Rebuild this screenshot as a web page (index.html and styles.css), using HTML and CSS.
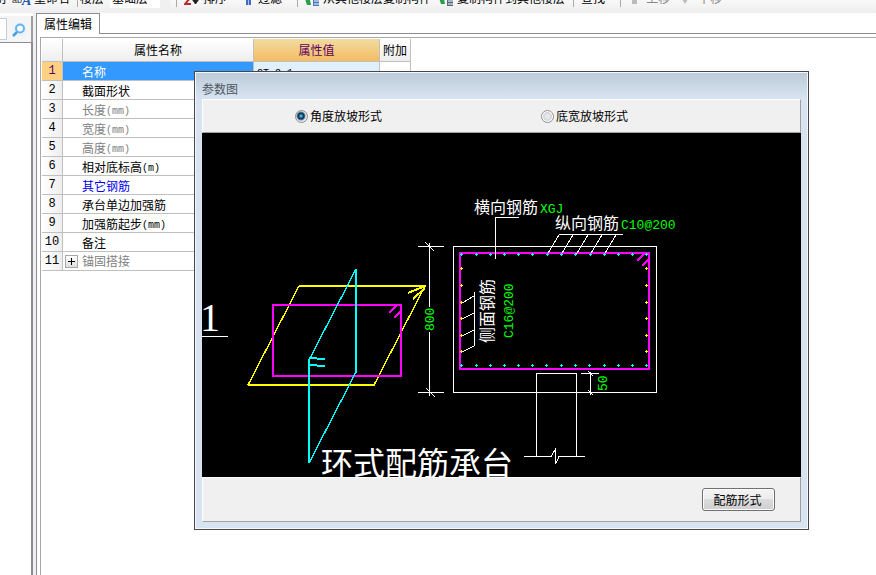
FILE: index.html
```html
<!DOCTYPE html>
<html lang="zh-CN">
<head>
<meta charset="utf-8">
<title>属性编辑</title>
<link rel="stylesheet" href="styles.css">
</head>
<body>
<header class="toolbar">
  <div class="tools">
    <button class="tool first">制</button>
    <button class="tool rename"><svg width="20" height="16" viewBox="0 0 20 16"><text class="ico-ab" x="0" y="13">ab</text><text class="ico-a" x="10" y="15">A</text></svg>重命名</button>
    <span class="sep"></span>
    <label class="floor" for="floor">楼层</label>
    <select id="floor" class="combo"><option>基础层</option></select>
    <span class="sep"></span>
    <button class="tool sort"><svg width="16" height="16" viewBox="0 0 16 16"><path d="M1 8h5L1 14h6" fill="none" stroke="#b03030" stroke-width="2"/><path d="M11 2v8M8 9h7l-3.500 5z" fill="#222" stroke="#222"/></svg>排序</button>
    <button class="tool filter"><svg width="10" height="16" viewBox="0 0 10 16"><path d="M3 4h5v11H3z" fill="#4169c8"/><path d="M5 4h1v11H5z" fill="#a8c0f0"/></svg>过滤</button>
    <span class="sep"></span>
    <button class="tool"><svg width="15" height="16" viewBox="0 0 15 16"><path d="M0 9l5 1 1 5H2z" fill="#28a048"/><path d="M8 3h6v13H8z" fill="#4878c0"/><path d="M9 8h5M9 11h5M9 14h5" stroke="#fff"/></svg>从其他楼层复制构件</button>
    <button class="tool"><svg width="15" height="16" viewBox="0 0 15 16"><path d="M0 8l5 1 1 5H2z" fill="#28a048"/><path d="M8 3h6v13H8z" fill="#586880"/><path d="M9 8h5M9 11h5M9 14h5" stroke="#fff"/></svg>复制构件到其他楼层</button>
    <span class="sep"></span>
    <button class="tool find">查找</button>
    <span class="sep"></span>
    <button class="tool move" disabled><svg width="15" height="16" viewBox="0 0 15 16"><path d="M4 8h5v6H4z" fill="#bbb"/></svg>上移</button>
    <button class="tool move" disabled><svg width="15" height="16" viewBox="0 0 15 16"><path d="M2 9h6l-3 5z" fill="#bbb"/></svg>下移</button>
  </div>
</header>
<main class="work">
  <aside class="side">
    <div class="search">
      <input class="search-box" type="text" aria-label="搜索">
      <button class="search-go" aria-label="查找构件"><svg width="14" height="14" viewBox="0 0 14 14"><rect width="14" height="14" fill="#eef3f7"/><circle cx="8" cy="5.500" r="4" fill="#f4fbff" stroke="#64b4ec" stroke-width="2"/><path d="M5 9l-4 4" stroke="#4c9cdc" stroke-width="2.500"/></svg></button>
    </div>
    <div class="tree"></div>
  </aside>
  <section class="editor">
    <div class="tabs"><button class="tab">属性编辑</button><span class="tab-line"></span></div>
    <div class="sheet">
      <table class="props">
        <colgroup><col class="c-no"><col class="c-name"><col class="c-value"><col class="c-extra"></colgroup>
        <thead><tr><th></th><th>属性名称</th><th class="current">属性值</th><th>附加</th></tr></thead>
        <tbody>
          <tr class="selected"><th>1</th><td>名称</td><td><span class="half">CT-2-1</span></td><td></td></tr>
          <tr><th>2</th><td>截面形状</td><td></td><td></td></tr>
          <tr class="locked"><th>3</th><td>长度<span class="half">(mm)</span></td><td></td><td></td></tr>
          <tr class="locked"><th>4</th><td>宽度<span class="half">(mm)</span></td><td></td><td></td></tr>
          <tr class="locked"><th>5</th><td>高度<span class="half">(mm)</span></td><td></td><td></td></tr>
          <tr><th>6</th><td>相对底标高<span class="half">(m)</span></td><td></td><td></td></tr>
          <tr class="linked"><th>7</th><td>其它钢筋</td><td></td><td></td></tr>
          <tr><th>8</th><td>承台单边加强筋</td><td></td><td></td></tr>
          <tr><th>9</th><td>加强筋起步<span class="half">(mm)</span></td><td></td><td></td></tr>
          <tr><th>10</th><td>备注</td><td></td><td></td></tr>
          <tr class="locked group"><th>11</th><td><div class="group-cell"><button class="expand" aria-label="展开"><svg width="9" height="9" viewBox="0 0 9 9"><path d="M1 4.500h7M4.500 1v7" stroke="#000"/></svg></button>锚固搭接</div></td><td></td><td></td></tr>
        </tbody>
      </table>
    </div>
  </section>
</main>

<div class="dialog" role="dialog" aria-labelledby="dlg-title">
  <div class="dialog-title" id="dlg-title">参数图</div>
  <div class="client">
    <div class="options">
      <label class="option"><input type="radio" name="slope" checked>角度放坡形式</label>
      <label class="option"><input type="radio" name="slope">底宽放坡形式</label>
    </div>
    <svg class="drawing" width="599" height="344" viewBox="202 133 599 344">
      <defs>
        <path id="dot" d="M-1 .5h3M.5 -1v3"/>
      </defs>
      <text class="serif" x="200" y="331">1</text>
      <path class="w" d="M202 336.500h26"/>

      <g class="yellow">
        <path class="thick" d="M299 286H426M248 385H375"/>
        <path class="slant" d="M299 286L248 385M425 286L374 385"/>
        <path class="thick" d="M408 293l17-7M413 299l12-11"/>
      </g>
      <rect class="magenta thick" x="273" y="305" width="128" height="71"/>
      <path class="magenta thick" d="M389 313l8-8M394 318l7-7"/>
      <g class="cyan">
        <path class="thick" d="M356 269V372M309 360V463M309 358l16 1M309 365l16 1"/>
        <path class="slant" d="M356 269L309 360M309 463L356 372"/>
      </g>

      <path class="w" d="M429.500 243V307M429.500 332V396M418 246.500H444M418 392.500H444M425 242l9 9M426 388l9 9"/>
      <text class="num" transform="translate(434 331) rotate(-90)">800</text>

      <rect class="w" x="453.500" y="246.500" width="203" height="146"/>
      <rect class="magenta thick" x="460" y="253" width="189" height="116"/>
      <path class="magenta thick" d="M637 261l8-8M642 266l7-7"/>

      <path class="w" d="M519 217.500H495.500V259"/>
      <path class="w" d="M559 234.500H623M559 235l-12 20M573 235l-12 20M588 235l-12 20M602 235l-12 20M616 235l-12 20"/>
      <path class="w" d="M474.500 292V346M474 296l-12 7M474 313l-12 6M474 330l-12 6M474 346l-12 6"/>

      <g class="cyan">
        <use href="#dot" x="461" y="254"/><use href="#dot" x="476" y="254"/><use href="#dot" x="490" y="254"/><use href="#dot" x="504" y="254"/><use href="#dot" x="518" y="254"/><use href="#dot" x="532" y="254"/><use href="#dot" x="547" y="254"/><use href="#dot" x="561" y="254"/><use href="#dot" x="575" y="254"/><use href="#dot" x="590" y="254"/><use href="#dot" x="604" y="254"/><use href="#dot" x="618" y="254"/><use href="#dot" x="632" y="254"/><use href="#dot" x="646" y="254"/>
        <use href="#dot" x="461" y="365"/><use href="#dot" x="476" y="365"/><use href="#dot" x="490" y="365"/><use href="#dot" x="504" y="365"/><use href="#dot" x="518" y="365"/><use href="#dot" x="532" y="365"/><use href="#dot" x="546" y="365"/><use href="#dot" x="561" y="365"/><use href="#dot" x="575" y="365"/><use href="#dot" x="589" y="365"/><use href="#dot" x="604" y="365"/><use href="#dot" x="618" y="365"/><use href="#dot" x="632" y="365"/><use href="#dot" x="646" y="365"/>
      </g>
      <g class="yellow">
        <use href="#dot" x="461" y="268"/><use href="#dot" x="461" y="285"/><use href="#dot" x="461" y="302"/><use href="#dot" x="461" y="318"/><use href="#dot" x="461" y="335"/><use href="#dot" x="461" y="351"/>
        <use href="#dot" x="646" y="268"/><use href="#dot" x="646" y="285"/><use href="#dot" x="646" y="302"/><use href="#dot" x="646" y="318"/><use href="#dot" x="646" y="335"/><use href="#dot" x="646" y="351"/>
      </g>

      <text class="cjk" x="474" y="213">横向钢筋</text>
      <text class="num" x="540" y="213">XGJ</text>
      <text class="cjk" x="555" y="229">纵向钢筋</text>
      <text class="num" x="621" y="229">C10@200</text>
      <text class="cjk" transform="translate(493 343) rotate(-90)">侧面钢筋</text>
      <text class="num" transform="translate(513 338) rotate(-90)">C16@200</text>

      <path class="w" d="M536.500 456V373.500H576.500V456"/>
      <path class="w" d="M524 456.500H551L555.500 449V464L559 456.500H585"/>
      <path class="w" d="M590.500 372V395M581 373.500H599M588 371l5 5M588 390l5 5"/>
      <text class="num" transform="translate(607 391) rotate(-90)">50</text>
      <text class="caption" x="321" y="475">环式配筋承台</text>
    </svg>
    <div class="actions"><button class="push">配筋形式</button></div>
  </div>
</div>
</body>
</html>
```
FILE: styles.css
```css
* { box-sizing: border-box; }

body {
  margin: 0;
  min-height: 100vh;
  display: flex;
  flex-direction: column;
  overflow: hidden;
  background: #fff;
  color: #000;
  font: 12px/16px "Noto Sans CJK SC", sans-serif;
}

button, input, select { font: inherit; color: inherit; margin: 0; padding: 0; border: 0; }
button { background: none; white-space: nowrap; }
svg { display: block; flex: none; }

/* toolbar, scrolled partly above the window */
.toolbar { height: 13px; overflow: hidden; background: linear-gradient(#f8f8f8, #eee); }
.tools { display: flex; align-items: center; height: 20px; margin-top: -12px; }
.tool { display: flex; align-items: center; gap: 3px; margin-right: 8px; }
.tool.first { margin: 0 6px 0 -6px; }
.tool.rename { gap: 2px; margin-right: 7px; }
.tool.filter { margin: 0 15px 0 8px; }
.tool.filter svg { margin-right: 2px; }
.tool.find { margin: 0 15px 0 0; }
.tool.move { margin: 0 10px 0 0; color: #888; }
.sep { width: 1px; height: 18px; margin-right: 7px; background: #aaa; }
.floor { margin: 0 6px 0 -5px; }
.combo {
  appearance: none;
  width: 61px;
  height: 20px;
  margin: 0 5px 0 0;
  padding-left: 2px;
  background: linear-gradient(#f0f0f0, #f0f0f0) right / 11px 100% no-repeat #fff;
}
.ico-ab { font: 9px "Liberation Sans", sans-serif; fill: #333; }
.ico-a { font: italic bold 14px "Liberation Serif", serif; fill: #2458b0; }

.work { flex: 1; display: flex; }

.side { display: flex; flex-direction: column; width: 33px; padding-top: 3px; }
.search { display: flex; align-items: center; height: 26px; background: #f5f5f5; border-right: 2px solid #a0a0a0; }
.search-box { width: 7px; height: 22px; border: 1px solid #c8ccd4; border-left: 0; background: #fff; }
.search-go { margin-left: 5px; padding-top: 2px; }
.tree { flex: 1; border-top: 1px solid #8c8c94; border-right: 2px solid #8c8c94; background: #fff; }

.editor { flex: 1; display: flex; flex-direction: column; padding-left: 3px; background: #f0f0f0; }
.tabs { display: flex; height: 21px; background: #fff; }
.tab { width: 64px; border: 1px solid #8c8c94; border-bottom: 0; background: #fff; }
.tab-line { flex: 1; border-bottom: 1px solid #8c8c94; }
.sheet {
  flex: 1;
  padding: 3px 0 0 3px;
  border-left: 1px solid #8c8c94;
  background:
    linear-gradient(#a8a8a8, #a8a8a8) 3px 3px / 100% 1px no-repeat,
    linear-gradient(#a8a8a8, #a8a8a8) 3px 3px / 1px 100% no-repeat,
    #fff;
}

.props {
  width: 371px;
  border-collapse: separate;
  border-spacing: 0;
  table-layout: fixed;
  padding: 2px 0 0 2px;
}
.c-no { width: 21px; }
.c-name { width: 191px; }
.c-value { width: 126px; }
.c-extra { width: 31px; }
.props th, .props td {
  height: 19px;
  padding: 2px 0 0;
  border-right: 1px solid #c0c0c0;
  border-bottom: 1px solid #c0c0c0;
  font-weight: normal;
  line-height: 16px;
  white-space: nowrap;
}
.props th { background: linear-gradient(90deg, #fff, #eee); }
.props thead th { height: 23px; padding: 0; background: linear-gradient(#fff, #eee); }
.props thead .current { background: linear-gradient(#f0dca0, #f4bc64); color: #600060; }
.props tbody th { padding: 0; font-family: "Liberation Mono", monospace; }
.props td { padding-left: 19px; }
.props td + td { padding-left: 3px; }
.half { font: 10px/12px "Liberation Mono", monospace; vertical-align: 1px; }
.locked td { color: #808080; }
.linked td { color: #0000f0; }
.selected td:nth-child(2) { background: #3399ff; color: #fff; }
.selected td:nth-child(3) { background: #e0f0ff; }
.props .selected th { background: #ffcf84; color: #600060; }
.props .group td:nth-child(2) { padding: 0 0 0 2px; }
.group-cell { display: flex; align-items: center; gap: 4px; }
.expand { display: grid; place-items: center; width: 13px; height: 13px; border: 1px solid #a8a8a8; background: linear-gradient(#fff, #ddd); }

/* floating parameter window */
.dialog {
  position: absolute;
  left: 194px;
  top: 71px;
  padding: 1px 7px 7px;
  border: 1px solid #484848;
  background: linear-gradient(#bccad9, #d7e3f0 26px);
  box-shadow: inset 0 0 0 1px #f4f8fc;
}
.dialog-title { height: 26px; padding-top: 8px; color: #4c5560; }
.client { background: #f0f0f0; }
.options {
  display: grid;
  grid-template-columns: 246px auto;
  align-items: center;
  height: 34px;
  padding-left: 92px;
  border: 1px solid #fff;
  border-right-color: #a0a0a0;
  border-bottom-color: #a0a0a0;
}
.option { display: flex; align-items: center; gap: 2px; }
.option input {
  appearance: none;
  width: 13px;
  height: 13px;
  border: 1px solid #8c9094;
  border-radius: 50%;
  background: radial-gradient(circle, #e8e8e8 2px, #cfd4d8 4px, #fff 5px);
}
.option input:checked { background: radial-gradient(circle at 5px 5px, #60d8f8 0, #145c94 2px, #102840 3px, #e0e8f0 5px); }
.drawing { background: #000; shape-rendering: crispEdges; }
.actions {
  display: flex;
  justify-content: flex-end;
  align-items: center;
  height: 45px;
  padding-right: 25px;
  border: 1px solid #fff;
  border-right-color: #a0a0a0;
  border-bottom-color: #a0a0a0;
}
.push {
  width: 73px;
  height: 23px;
  padding-right: 2px;
  border: 1px solid #707070;
  border-radius: 3px;
  background: linear-gradient(#f4f4f4, #ebebeb 50%, #dcdcdc 50%, #cfcfcf);
  box-shadow: inset 0 0 0 1px #fcfcfc;
}

.w { fill: none; stroke: #fff; }
.yellow { fill: none; stroke: #ff0; }
.cyan { fill: none; stroke: #0ff; }
.magenta { fill: none; stroke: #f0f; }
.thick { stroke-width: 2px; }
.slant { stroke-width: 1.4px; }
.serif { font: 40px "Liberation Serif", serif; fill: #fff; }
.cjk { font: 16px "Noto Sans CJK SC", sans-serif; fill: #fff; }
.num { font: 13px "Liberation Mono", monospace; fill: #0f0; }
.caption { font: 32px "Noto Sans CJK SC", sans-serif; fill: #fff; }
```
